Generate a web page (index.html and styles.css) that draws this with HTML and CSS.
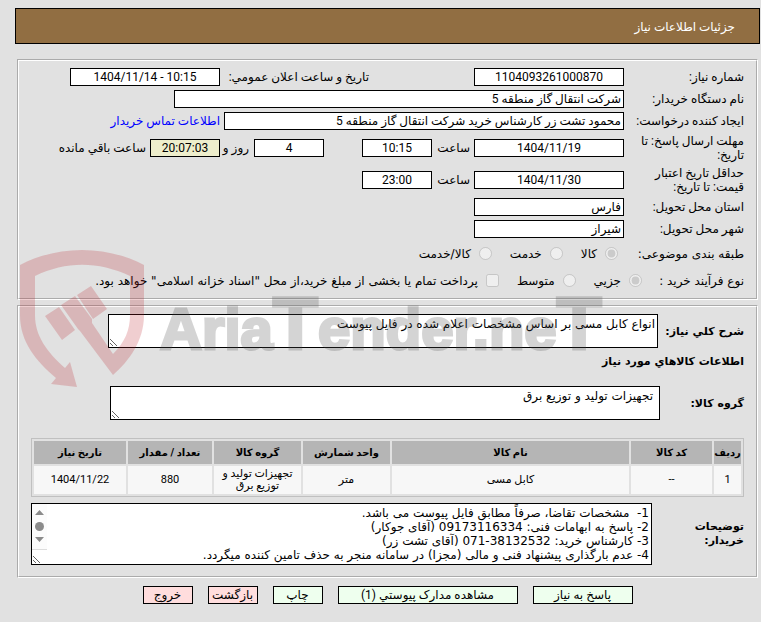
FILE: index.html
```
<!DOCTYPE html>
<html lang="fa" dir="rtl">

<head>
  <meta charset="UTF-8" />
  <meta name="viewport" content="width=device-width,initial-scale=1" />
  <title>جزئیات اطلاعات نیاز</title>
  <link rel="stylesheet" href="styles.css">
</head>

<body>
  <h1 class="page-title">جزئیات اطلاعات نیاز</h1>

  <form class="need-form">
    <fieldset class="panel">
      <div class="row">
        <label class="caption" for="need-no">شماره نیاز:</label>
        <input class="medium" type="text" id="need-no" value="1104093261000870" readonly>
        <label class="announce" for="announce">تاریخ و ساعت اعلان عمومي:</label>
        <input class="medium" type="text" id="announce" value="1404/11/14 - 10:15" dir="ltr" readonly>
      </div>
      <div class="row">
        <label class="caption" for="buyer">نام دستگاه خریدار:</label>
        <input class="xlong" type="text" id="buyer" value="شرکت انتقال گاز منطقه 5" readonly>
      </div>
      <div class="row">
        <label class="caption" for="creator">ایجاد کننده درخواست:</label>
        <input class="long" type="text" id="creator" value="محمود تشت زر کارشناس خرید شرکت انتقال گاز منطقه 5" readonly>
        <a href="#contact">اطلاعات تماس خریدار</a>
      </div>
      <div class="row tall">
        <label class="caption" for="deadline">مهلت ارسال پاسخ: تا<br>تاریخ:</label>
        <input class="medium" type="text" id="deadline" value="1404/11/19" readonly>
        <label class="hour" for="deadline-hour">ساعت</label>
        <input class="short" type="text" id="deadline-hour" value="10:15" readonly>
        <input class="short days" type="text" id="days" value="4" readonly>
        <label class="hour" for="days">روز و</label>
        <input class="short remain" type="text" id="remain" value="20:07:03" readonly>
        <label for="remain">ساعت باقي مانده</label>
      </div>
      <div class="row tall">
        <label class="caption" for="validity">حداقل تاریخ اعتبار<br>قیمت: تا تاریخ:</label>
        <input class="medium" type="text" id="validity" value="1404/11/30" readonly>
        <label class="hour" for="validity-hour">ساعت</label>
        <input class="short" type="text" id="validity-hour" value="23:00" readonly>
      </div>
      <div class="row">
        <label class="caption" for="province">استان محل تحویل:</label>
        <input class="medium start" type="text" id="province" value="فارس" readonly>
      </div>
      <div class="row">
        <label class="caption" for="city">شهر محل تحویل:</label>
        <input class="medium start" type="text" id="city" value="شیراز" readonly>
      </div>
      <div class="row options">
        <span class="caption">طبقه بندی موضوعی:</span>
        <label><input type="radio" name="subject" checked disabled>کالا</label>
        <label><input type="radio" name="subject" disabled>خدمت</label>
        <label><input type="radio" name="subject" disabled>کالا/خدمت</label>
      </div>
      <div class="row options">
        <span class="caption narrow">نوع فرآیند خرید :</span>
        <label><input type="radio" name="process" checked disabled>جزیي</label>
        <label><input type="radio" name="process" disabled>متوسط</label>
        <label><input type="checkbox" disabled>پرداخت تمام یا بخشی از مبلغ خرید،از محل "اسناد خزانه اسلامی" خواهد بود.</label>
      </div>
    </fieldset>

    <fieldset class="panel goods-panel">
      <div class="area-row">
        <label for="summary">شرح کلي نیاز:</label>
        <textarea id="summary" readonly>انواع کابل مسی بر اساس مشخصات اعلام شده در فایل پیوست</textarea>
      </div>
      <h2>اطلاعات کالاهاي مورد نیاز</h2>
      <div class="area-row group">
        <label for="group">گروه کالا:</label>
        <textarea id="group" readonly>تجهیزات تولید و توزیع برق</textarea>
      </div>
      <table class="goods">
        <thead>
          <tr>
            <th class="c-row">ردیف</th>
            <th class="c-code">کد کالا</th>
            <th>نام کالا</th>
            <th class="c-unit">واحد شمارش</th>
            <th class="c-unit">گروه کالا</th>
            <th class="c-qty">تعداد / مقدار</th>
            <th class="c-date">تاریخ نیاز</th>
          </tr>
        </thead>
        <tbody>
          <tr>
            <td>1</td>
            <td>--</td>
            <td>کابل مسی</td>
            <td>متر</td>
            <td>تجهیزات تولید و توزیع برق</td>
            <td>880</td>
            <td>1404/11/22</td>
          </tr>
        </tbody>
      </table>
      <div class="area-row notes">
        <label for="notes">توضیحات خریدار:</label>
        <div class="notes-box">
          <textarea id="notes" readonly>1-  مشخصات تقاضا، صرفاً مطابق فایل پیوست می باشد.
2- پاسخ به ابهامات فنی: 09173116334 (آقای جوکار)
3- کارشناس خرید: 38132532-071 (آقای تشت زر)
4- عدم بارگذاری پیشنهاد فنی و مالی (مجزا) در سامانه منجر به حذف تامین کننده میگردد.</textarea>
          <svg class="scrollbar" viewBox="0 0 15 45" width="15" height="45" aria-hidden="true">
            <rect width="15" height="45" fill="#fcfcfc" />
            <path d="M3 11h9L7.500 6z M3 33h9l-4.500 5z" fill="#8b8b8b" />
            <circle cx="7.500" cy="22.500" r="4.500" fill="#8b8b8b" />
          </svg>
        </div>
      </div>
    </fieldset>

    <div class="actions">
      <button type="button" class="wide">پاسخ به نیاز</button>
      <button type="button" class="xwide">مشاهده مدارک پیوستي (1)</button>
      <button type="button">چاپ</button>
      <button type="button" class="leave">بازگشت</button>
      <button type="button" class="leave">خروج</button>
    </div>

    <svg class="watermark" viewBox="0 0 590 140" width="590" height="140" direction="ltr" aria-hidden="true">
      <g class="shield">
        <path d="M0 15C38-5 86-5 124 15V65C124 91 109 111 93 125L60 81L58 79L41 55L55 46L72 69L72 73L93 104C105 92 110 80 110 65V26C78 11 46 11 15 26V65C15 86 27 102 45 118L50 112L57 137L31 134L36 128C16 111 0 92 0 65Z" />
        <path d="M25 66L39 57L55 80L42 90Z M57 45L71 36L87 59L73 69Z" />
      </g>
      <text x="140" y="99">Aria<tspan class="tall-t">T</tspan>ender.ne<tspan class="tall-t">T</tspan></text>
    </svg>
  </form>
</body>

</html>
```
FILE: styles.css
```
body {
  margin: 8px 0 8px 15px;
  background: #e1e1e1;
  color: #000;
}

/* Roboto has no Arabic letters, it only gives the digits */
body,
input,
button {
  font-family: Roboto, "DejaVu Sans", sans-serif;
  font-size: 12px;
}

textarea,
.options,
.area-row,
h2 {
  font-family: "DejaVu Sans", sans-serif;
  font-size: 12px;
}

.page-title {
  box-sizing: border-box;
  height: 36px;
  margin: 0 1px 15px 0;
  padding: 0 24px;
  border: 1px solid #000;
  background: #916e42;
  color: #fff;
  font-size: 12px;
  font-weight: normal;
  line-height: 36px;
}

.need-form {
  position: relative;
  margin: 0 3px 0 2px;
}

.panel {
  margin: 0 0 5px;
  padding: 5px 12px 4px;
  border: 2px groove #fff;
}

.goods-panel {
  margin-bottom: 8px;
  padding: 7px 12px 11px;
}

.row {
  display: flex;
  align-items: center;
  gap: 4px;
  height: 22px;
  line-height: 14px;
  white-space: nowrap;
}

.row.tall {
  height: 32px;
}

.caption {
  width: 116px;
}

input[type=text],
textarea {
  box-sizing: border-box;
  border: 1px solid #000;
  background: #fff;
  color: #000;
}

input[type=text] {
  height: 18px;
  padding: 1px 2px;
}

.medium,
.short {
  width: 150px;
  text-align: center;
}

.short {
  width: 70px;
}

.start {
  text-align: right;
}

.xlong {
  width: 450px;
}

.long {
  width: 400px;
}

.announce {
  width: 145px;
  margin-right: 101px;
}

.hour {
  width: 34px;
}

.days {
  margin-right: 34px;
}

.days + .hour {
  width: 22px;
  margin: 0 1px 0 3px;
}

input.remain {
  background: #eeeecc;
}

a {
  color: #00f;
  text-decoration: none;
}

.row.options {
  gap: 18px;
  height: 27px;
}

.options .caption {
  width: 108px;
}

.options .narrow {
  width: 84px;
}

.options label {
  display: flex;
  align-items: center;
  gap: 8px;
}

.options input {
  width: 13px;
  height: 13px;
  margin: 0;
}

.area-row {
  display: flex;
  align-items: center;
  justify-content: space-between;
  font-size: 11px;
  font-weight: bold;
}

.area-row label {
  white-space: nowrap;
}

.area-row textarea {
  display: block;
  width: 550px;
  height: 34px;
  margin: 0;
  padding: 2px;
  line-height: 14px;
  overflow: hidden;
}

.area-row:first-child {
  padding-left: 77px;
}

.area-row.group {
  padding-left: 79px;
}

.area-row.group textarea {
  padding: 2px 6px;
}

h2 {
  margin: 7px 0 17px;
  font-size: 11px;
  line-height: 14px;
}

.goods {
  width: 100%;
  margin: 18px 0 6px;
  border: 1px solid #c0c0c0;
  border-spacing: 2px;
  table-layout: fixed;
  font-size: 11px;
  line-height: 12px;
  text-align: center;
}

.goods th {
  height: 23px;
  padding: 0;
  background: #b5b5b5;
  font-size: 10px;
}

.goods td {
  height: 28px;
  padding: 0 2px;
  background: #f7f7f7;
}

.c-row {
  width: 27px;
}

.c-code {
  width: 81px;
}

.c-unit {
  width: 87px;
}

.c-qty {
  width: 84px;
}

.c-date {
  width: 92px;
}

.area-row.notes label {
  width: 60px;
  line-height: 14px;
  white-space: normal;
}

.notes-box {
  position: relative;
  flex: 1;
  max-width: 621px;
}

.notes-box textarea {
  width: 100%;
  height: 62px;
}

.scrollbar {
  position: absolute;
  top: 1px;
  left: 1px;
  border-bottom: 1px solid #ddd;
}

.actions {
  display: flex;
  justify-content: center;
  gap: 15px;
}

button {
  width: 50px;
  height: 18px;
  padding: 0;
  border: 1px solid #000;
  background: #eeffee;
  color: #000;
  line-height: 16px;
}

.wide {
  width: 100px;
}

.xwide {
  width: 180px;
}

.leave {
  background: #ffdddd;
}

.watermark {
  position: absolute;
  top: 191px;
  left: 3px;
  pointer-events: none;
  overflow: visible;
}

.watermark text {
  fill: #505050;
  stroke: #505050;
  stroke-width: 3px;
  opacity: 0.24;
  font: bold 58px "Liberation Sans", sans-serif;
}

.tall-t {
  font-size: 74px;
}

.shield {
  fill: rgba(185, 30, 40, 0.22);
}
```
